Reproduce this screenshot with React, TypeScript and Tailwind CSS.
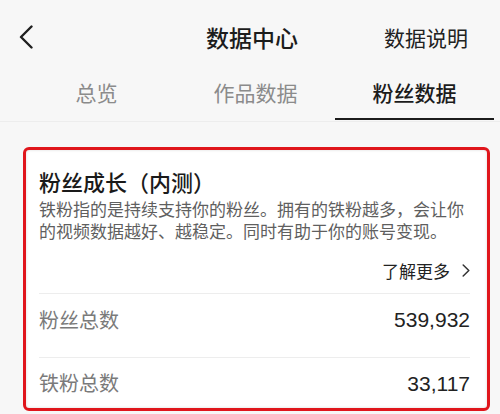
const cjk = 'font-["Noto_Sans_CJK_SC","Noto_Sans",sans-serif]'

const tabs = [
  { label: '总览', active: false },
  { label: '作品数据', active: false },
  { label: '粉丝数据', active: true },
]

const stats = [
  { label: '粉丝总数', value: '539,932', row: 'h-[64px] pb-[12px] border-b border-[#ededed]' },
  { label: '铁粉总数', value: '33,117', row: 'h-[50px]' },
]

export default function App() {
  return (
    <div className={`h-[414px] w-[500px] overflow-hidden bg-[#f7f7f7] ${cjk}`}>
      <header className="flex h-[74px] items-center">
        <svg className="ml-[19px] h-[24px] w-[14px] shrink-0" viewBox="0 0 14 24" fill="none">
          <polyline points="12.5,1.5 2,12 12.5,22.5" stroke="#1f1f1f" strokeWidth="2.4" strokeLinecap="round" strokeLinejoin="round" />
        </svg>
        <h1 className="ml-[173px] text-[23px] font-medium leading-none text-[#1c1c1c]">数据中心</h1>
        <button className="ml-auto mr-[32px] text-[21px] leading-none text-[#222]">数据说明</button>
      </header>

      <nav className="grid h-[48px] grid-cols-3 border-b border-[#ededed] pl-[17px] pr-[6px]">
        {tabs.map((tab) => (
          <div key={tab.label} className="relative flex items-center justify-center pb-[10px]">
            <span
              className={
                tab.active
                  ? 'text-[21px] font-medium leading-none text-[#1c1c1c]'
                  : 'text-[21px] leading-none text-[#8b8b8b]'
              }
            >
              {tab.label}
            </span>
            {tab.active && <span className="absolute inset-x-0 bottom-[1px] h-[2px] bg-[#1c1c1c]" />}
          </div>
        ))}
      </nav>

      <section className="ml-[23px] mt-[25px] w-[467px] rounded-[6px] border-[3px] border-[#e0161c] bg-white pl-[13px] pr-[17px] pt-[17px] shadow-[inset_0_0_3px_rgba(0,0,0,0.15)]">
        <h2 className="text-[22px] font-medium leading-[28px] text-[#1a1a1a]">粉丝成长（内测）</h2>
        <p className="mt-[3px] text-[17px] leading-[22px] text-[#5f5f5f]">
          铁粉指的是持续支持你的粉丝。拥有的铁粉越多，会让你的视频数据越好、越稳定。同时有助于你的账号变现。
        </p>
        <div className="mt-[16px] flex h-[24px] items-center justify-end">
          <span className="text-[17px] leading-none text-[#222]">了解更多</span>
          <svg className="ml-[12px] h-[13px] w-[8px]" viewBox="0 0 8 13" fill="none">
            <polyline points="1.2,1 6.8,6.5 1.2,12" stroke="#333" strokeWidth="1.5" strokeLinecap="round" strokeLinejoin="round" />
          </svg>
        </div>
        <div className="mt-[11px] border-t border-[#ededed]">
          {stats.map((s) => (
            <div key={s.label} className={`flex items-center justify-between ${s.row}`}>
              <span className="text-[20px] leading-none text-[#7a7a7a]">{s.label}</span>
              <span className='font-["Liberation_Sans","Noto_Sans_CJK_SC",sans-serif] text-[21px] leading-none text-[#222]'>
                {s.value}
              </span>
            </div>
          ))}
        </div>
      </section>
    </div>
  )
}
